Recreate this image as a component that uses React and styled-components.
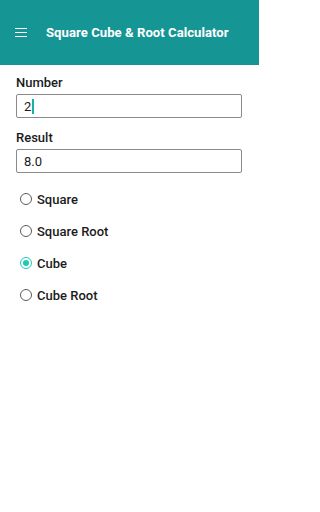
import React from "react";
import styled, { createGlobalStyle } from "styled-components";

const Global = createGlobalStyle`
  html, body { margin: 0; padding: 0; background: #fff; }
  body { font-family: Roboto, "Noto Sans", Arial, sans-serif; }
  * { box-sizing: border-box; }
`;

const Page = styled.div`
  width: 259px;
  min-height: 512px;
  background: #fff;
`;

const Toolbar = styled.header`
  height: 65px;
  background: #169595;
  display: flex;
  align-items: center;
  padding: 0 0 0 15px;
  gap: 19px;
`;

const Burger = styled.div`
  width: 12px;
  display: flex;
  flex-direction: column;
  gap: 2.5px;
  span {
    display: block;
    height: 1.5px;
    background: #fff;
  }
`;

const Title = styled.h1`
  margin: 0;
  color: #fff;
  font-size: 13.1px;
  font-weight: 700;
  letter-spacing: 0.05px;
`;

const Body = styled.main`
  padding: 9px 16px 0 16px;
  display: flex;
  flex-direction: column;
`;

const Label = styled.div`
  font-size: 13px;
  font-weight: 500;
  color: #1b1b1b;
  line-height: 18px;
  margin-bottom: 2px;
`;

const Field = styled.div`
  width: 226px;
  height: 24px;
  border: 1px solid #8a8a8a;
  border-radius: 2px;
  padding: 0 7px;
  display: flex;
  align-items: center;
  font-size: 13px;
  color: #1b1b1b;
  margin-bottom: ${(p) => p.$mb || 0}px;
`;

const Caret = styled.span`
  display: inline-block;
  width: 1.5px;
  height: 15px;
  background: #16b2a8;
  margin-left: 1px;
`;

const RadioList = styled.div`
  display: flex;
  flex-direction: column;
  gap: 12px;
  margin-top: 16px;
  padding-left: 4px;
`;

const RadioRow = styled.label`
  display: flex;
  align-items: center;
  gap: 5px;
  height: 20px;
  font-size: 13px;
  font-weight: 500;
  color: #1b1b1b;
`;

const Circle = styled.span`
  width: 12px;
  height: 12px;
  border-radius: 50%;
  border: 1.3px solid ${(p) => (p.$on ? "#1ccab5" : "#5a5a5a")};
  display: flex;
  align-items: center;
  justify-content: center;
  &::after {
    content: "";
    width: 6px;
    height: 6px;
    border-radius: 50%;
    background: ${(p) => (p.$on ? "#1ccab5" : "transparent")};
  }
`;

const options = ["Square", "Square Root", "Cube", "Cube Root"];

export default function App() {
  return (
    <Page>
      <Global />
      <Toolbar>
        <Burger>
          <span />
          <span />
          <span />
        </Burger>
        <Title>Square Cube &amp; Root Calculator</Title>
      </Toolbar>
      <Body>
        <Label>Number</Label>
        <Field $mb={11}>
          2<Caret />
        </Field>
        <Label>Result</Label>
        <Field>8.0</Field>
        <RadioList>
          {options.map((o) => (
            <RadioRow key={o}>
              <Circle $on={o === "Cube"} />
              {o}
            </RadioRow>
          ))}
        </RadioList>
      </Body>
    </Page>
  );
}
